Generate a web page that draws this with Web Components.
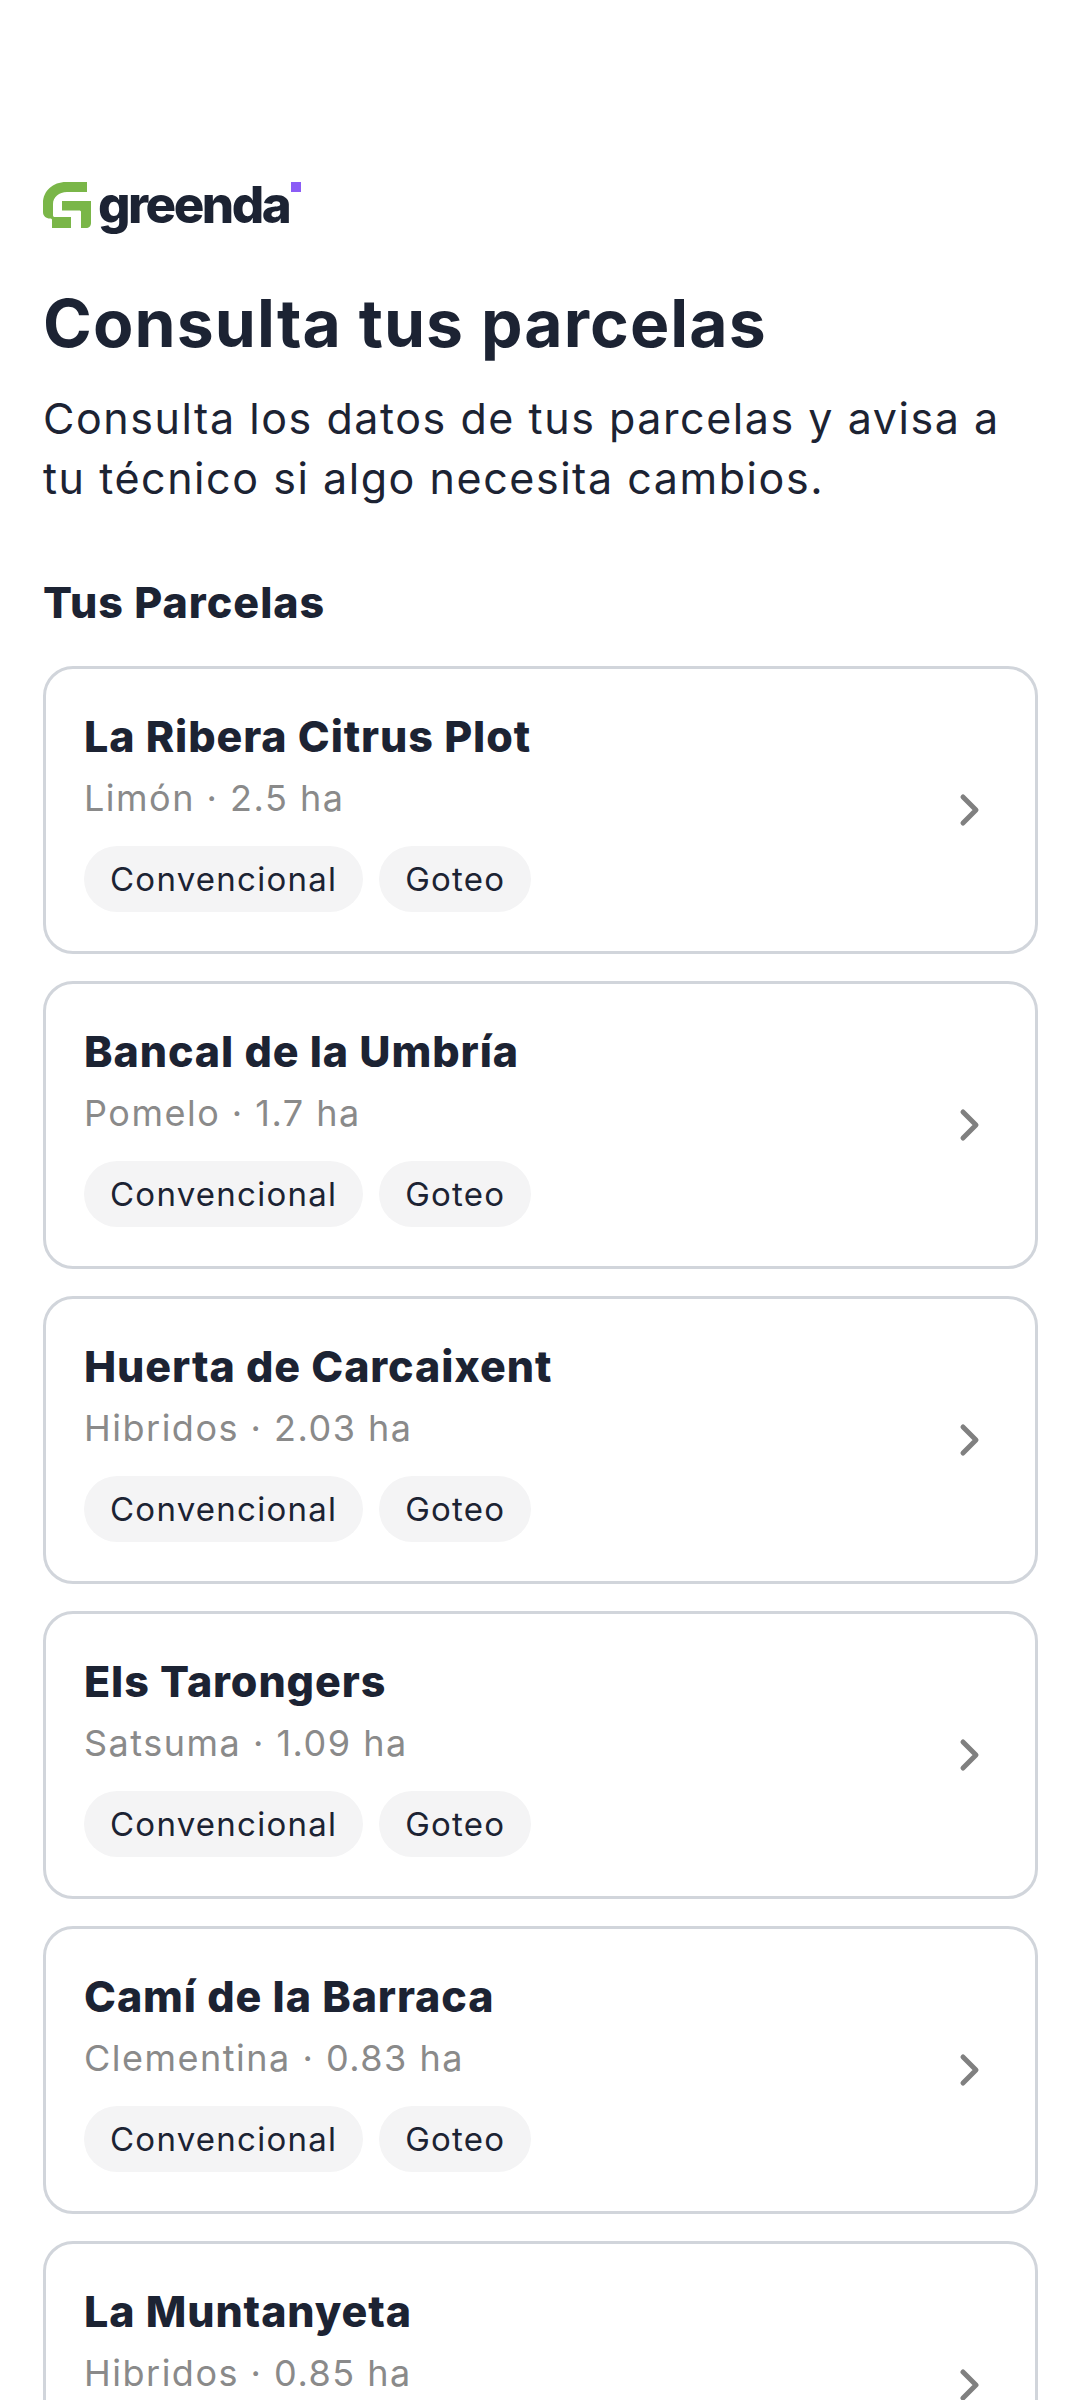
<!doctype html>
<html lang="es">
<head>
<meta charset="utf-8">
<title>Consulta tus parcelas</title>
<style>
  html, body { margin: 0; height: 2400px; overflow: hidden; background: #fff; }
  body { font-family: Inter, "Noto Sans", sans-serif; color: #1c2333; }
</style>
</head>
<body>
<parcelas-screen>
  <plot-card name="La Ribera Citrus Plot" crop="Limón · 2.5 ha"><tag-chip>Convencional</tag-chip><tag-chip>Goteo</tag-chip></plot-card>
  <plot-card name="Bancal de la Umbría" crop="Pomelo · 1.7 ha"><tag-chip>Convencional</tag-chip><tag-chip>Goteo</tag-chip></plot-card>
  <plot-card name="Huerta de Carcaixent" crop="Hibridos · 2.03 ha"><tag-chip>Convencional</tag-chip><tag-chip>Goteo</tag-chip></plot-card>
  <plot-card name="Els Tarongers" crop="Satsuma · 1.09 ha"><tag-chip>Convencional</tag-chip><tag-chip>Goteo</tag-chip></plot-card>
  <plot-card name="Camí de la Barraca" crop="Clementina · 0.83 ha"><tag-chip>Convencional</tag-chip><tag-chip>Goteo</tag-chip></plot-card>
  <plot-card name="La Muntanyeta" crop="Hibridos · 0.85 ha"><tag-chip>Convencional</tag-chip><tag-chip>Goteo</tag-chip></plot-card>
</parcelas-screen>

<script>
// logo: drawn mark plus the wordmark as real text
class GreendaLogo extends HTMLElement {
  constructor() {
    super();
    this.attachShadow({ mode: "open" }).innerHTML = `
<style>
:host { display: flex; align-items: center; height: 46px; }
svg { display: block; flex: none; }
.word {
  position: relative;
  margin-left: 6px;
  font: 800 51px/46px Inter, sans-serif;
  letter-spacing: -2.5px;
  color: #1c2333;
}
.dot {
  position: absolute;
  top: 0;
  right: -12px;
  width: 10px;
  height: 10px;
  background: #8b5cf6;
}
</style>
<svg width="49" height="46" viewBox="0 0 49 46" aria-hidden="true">
  <path fill="#7ab648" d="M44 0V10H24C16 10 10 15 10 22V33C10 34.500 10.500 35 12 35H28V46H9V38C9 37 8.500 36.500 7 36.500C3 36.500 0 34 0 30V21C0 9 10 0 23 0Z"/>
  <path fill="#7ab648" d="M19 19H48V41C48 44 46 46 43 46H38V30C38 29 37.500 28.500 36 28.500H19Z"/>
</svg>
<span class="word">greenda<i class="dot"></i></span>`;
  }
}
customElements.define("greenda-logo", GreendaLogo);

class TagChip extends HTMLElement {
  constructor() {
    super();
    this.attachShadow({ mode: "open" }).innerHTML = `
<style>
:host {
  display: inline-flex;
  align-items: center;
  height: 66px;
  padding: 0 26px;
  border-radius: 33px;
  background: #f4f4f5;
  font-size: 33px;
  letter-spacing: 1.25px;
  color: #1c2333;
}
</style>
<slot></slot>`;
  }
}
customElements.define("tag-chip", TagChip);

class PlotCard extends HTMLElement {
  constructor() {
    super();
    this.attachShadow({ mode: "open" }).innerHTML = `
<style>
:host {
  display: flex;
  align-items: center;
  box-sizing: border-box;
  flex: none;
  height: 288px;
  padding: 0 53px 0 38px;
  border: 3px solid #d1d5db;
  border-radius: 30px;
  background: #fff;
}
.body { flex: 1; min-width: 0; padding-bottom: 3px; }
.name {
  font-size: 43px;
  line-height: 62px;
  font-weight: 800;
  letter-spacing: 0.9px;
  color: #1c2333;
}
.crop {
  font-size: 36px;
  line-height: 62px;
  letter-spacing: 1.5px;
  color: #8a8a8a;
}
.tags { display: flex; gap: 16px; margin-top: 17px; }
svg { display: block; flex: none; }
</style>
<div class="body">
  <div class="name"></div>
  <div class="crop"></div>
  <div class="tags"><slot></slot></div>
</div>
<svg width="24" height="34" viewBox="0 0 24 34" aria-hidden="true">
  <path d="M5 4L18 17L5 30" fill="none" stroke="#808080" stroke-width="5" stroke-linecap="round" stroke-linejoin="round"/>
</svg>`;
  }
  connectedCallback() {
    this.shadowRoot.querySelector(".name").textContent = this.getAttribute("name");
    this.shadowRoot.querySelector(".crop").textContent = this.getAttribute("crop");
  }
}
customElements.define("plot-card", PlotCard);

class ParcelasScreen extends HTMLElement {
  constructor() {
    super();
    this.attachShadow({ mode: "open" }).innerHTML = `
<style>
:host {
  display: block;
  box-sizing: border-box;
  height: 2400px;
  padding: 182px 42px 0 43px;
  overflow: hidden;
}
h1 {
  margin: 50px 0 0;
  font-size: 66px;
  line-height: 90px;
  font-weight: 700;
  letter-spacing: 1.1px;
}
p {
  margin: 20px 0 0;
  font-size: 43px;
  line-height: 60px;
  letter-spacing: 1.55px;
}
h2 {
  margin: 64px 0 0;
  font-size: 43px;
  line-height: 60px;
  font-weight: 800;
  letter-spacing: 1px;
}
.list { display: flex; flex-direction: column; gap: 27px; margin-top: 34px; }
</style>
<greenda-logo></greenda-logo>
<h1>Consulta tus parcelas</h1>
<p>Consulta los datos de tus parcelas y avisa a tu técnico si algo necesita cambios.</p>
<h2>Tus Parcelas</h2>
<div class="list"><slot></slot></div>`;
  }
}
customElements.define("parcelas-screen", ParcelasScreen);
</script>
</body>
</html>
